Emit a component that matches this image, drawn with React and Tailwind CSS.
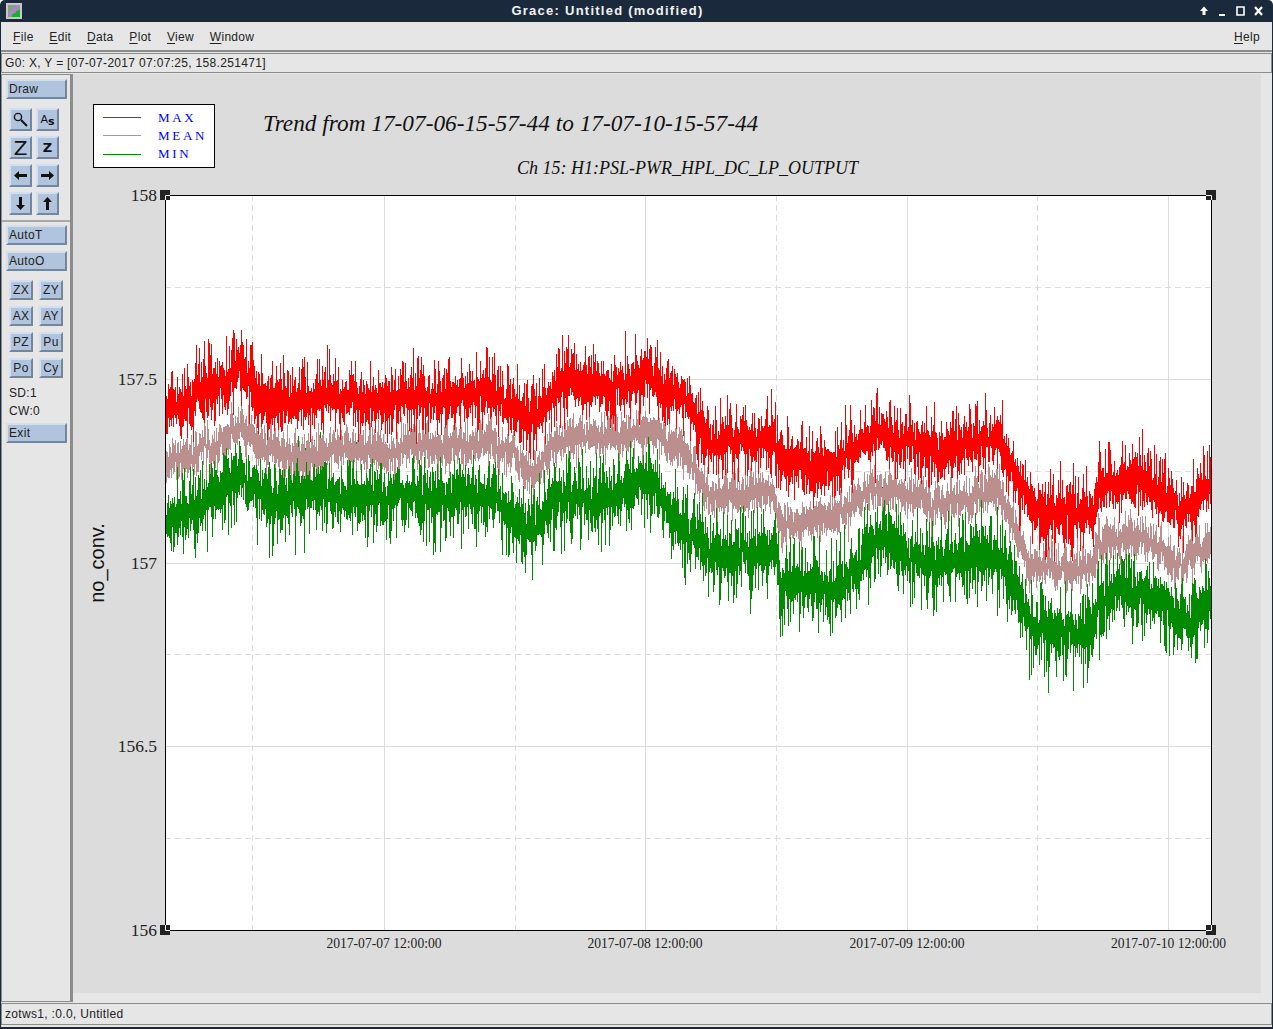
const SANS = "font-['Liberation_Sans',Arial,sans-serif]";

// pixel position of the trace centre along x, read off the plot
const maxCurve = [
	[165, 412], [190, 402], [212, 384], [240, 372], [260, 396], [300, 404], [350, 396], [400, 402],
	[450, 394], [490, 392], [530, 418], [560, 388], [600, 386], [650, 380], [690, 408], [712, 446],
	[772, 436], [780, 466], [830, 466], [870, 432], [930, 450], [1000, 444], [1030, 506], [1060, 518],
	[1093, 512], [1098, 484], [1140, 480], [1175, 506], [1211, 484],
];
const meanCurve = [
	[165, 470], [190, 458], [212, 442], [240, 428], [260, 446], [300, 452], [350, 446], [400, 452],
	[450, 446], [490, 444], [530, 470], [560, 440], [600, 438], [650, 432], [690, 462], [712, 496],
	[772, 490], [780, 522], [830, 524], [870, 484], [930, 502], [1000, 498], [1030, 562], [1060, 576],
	[1093, 570], [1098, 540], [1140, 538], [1175, 566], [1211, 544],
];
const minCurve = [
	[165, 524], [190, 510], [212, 490], [240, 476], [260, 496], [300, 498], [350, 494], [400, 500],
	[450, 492], [490, 496], [525, 532], [560, 500], [600, 498], [650, 488], [690, 530], [712, 558],
	[774, 548], [780, 585], [830, 594], [880, 540], [930, 562], [1000, 556], [1030, 626], [1060, 636],
	[1093, 630], [1098, 596], [1160, 596], [1190, 628], [1211, 600],
];

const makeRandom = (seed) => () => {
	seed = (seed * 1664525 + 1013904223) % 4294967296;
	return seed / 4294967296;
};

const curveAt = (curve, x) => {
	for (let i = 1; i < curve.length; i++) {
		if (x <= curve[i][0]) {
			const [x0, y0] = curve[i - 1];
			const [x1, y1] = curve[i];
			return y0 + ((y1 - y0) * (x - x0)) / (x1 - x0);
		}
	}
	return curve[curve.length - 1][1];
};

// one noisy vertical stroke per sample, so the band looks like a dense trace
const makeTrace = (curve, seed, spread, spike, jitter) => {
	const random = makeRandom(seed);
	let path = "";
	let drift = 0;
	for (let x = 166; x < 1211; x += 1) {
		drift = drift * 0.9 + (random() - 0.5) * 4;
		const wobble = Math.sin(x / 13 + seed) * 3 + drift;
		const centre = curveAt(curve, x) + wobble + (random() - 0.5) * jitter;
		const up = random() ** 3 * spike + spread * (0.4 + random() * 0.7);
		const down = random() ** 3 * spike + spread * (0.4 + random() * 0.7);
		path += `M${x + 0.5} ${(centre - up).toFixed(0)}V${(centre + down).toFixed(0)}`;
	}
	return path;
};

const maxTrace = makeTrace(maxCurve, 11, 17, 32, 12);
const meanTrace = makeTrace(meanCurve, 23, 14, 14, 12);
const minTrace = makeTrace(minCurve, 37, 18, 40, 14);

const BEVEL =
	"border-2 border-t-[#d3dfee] border-l-[#d3dfee] border-b-[#76869a] border-r-[#76869a] bg-[#b0c4de]";

function TextButton({ label, className }) {
	return (
		<div className={`flex h-5 w-[61px] items-center pl-px text-[12px] text-[#222] ${BEVEL} ${className}`}>
			{label}
		</div>
	);
}

function SmallButton({ label }) {
	return (
		<div className={`flex h-5 w-6 items-center justify-center text-[12px] text-[#222] ${BEVEL}`}>{label}</div>
	);
}

function IconButton({ children }) {
	return <div className={`flex h-[23px] w-[23px] items-center justify-center ${BEVEL}`}>{children}</div>;
}

function ArrowIcon({ rotate }) {
	return (
		<svg width="15" height="15" viewBox="0 0 15 15" style={{ transform: `rotate(${rotate}deg)` }}>
			<path d="M1 7.5 6 3v3h8v3H6v3z" fill="#111" />
		</svg>
	);
}

function Menu({ first, rest }) {
	return (
		<span>
			<u className="underline-offset-2">{first}</u>
			{rest}
		</span>
	);
}

function Handle({ x, y, dx, dy }) {
	return (
		<g>
			<rect x={x - 5} y={y - 5} width="10" height="10" fill="#222" />
			<path d={`M${x + dx * 5} ${y + 0.5}H${x + 0.5}V${y + dy * 5}`} stroke="#fff" strokeWidth="1" fill="none" />
		</g>
	);
}

function Plot() {
	const solidX = [384, 645, 907, 1168];
	const dashedX = [252, 515, 776, 1037];
	const solidY = [379, 563, 746];
	const dashedY = [287, 471, 654, 838];
	const yLabels = [
		["158", 201],
		["157.5", 385],
		["157", 569],
		["156.5", 752],
		["156", 936],
	];
	return (
		<svg width="1188" height="919" viewBox="73 74 1188 919" className="block tracking-normal">
			<rect x="93.5" y="104.5" width="121" height="63" fill="#fff" stroke="#000" />
			<path d="M103 117.5H141" stroke="#f00" />
			<path d="M103 135.5H141" stroke="#bc8f8f" />
			<path d="M103 154.5H141" stroke="#008b00" />
			<g fontFamily="'Liberation Serif',serif" fontSize="13" fill="#0000ff" letterSpacing="2.7">
				<text x="158" y="122">MAX</text>
				<text x="158" y="140">MEAN</text>
				<text x="158" y="158">MIN</text>
			</g>
			<g fontFamily="'Liberation Serif',serif" fontStyle="italic" fill="#111">
				<text x="263" y="131" fontSize="23.3">Trend from 17-07-06-15-57-44 to 17-07-10-15-57-44</text>
				<text x="517" y="174" fontSize="18">Ch 15: H1:PSL-PWR_HPL_DC_LP_OUTPUT</text>
			</g>
			<rect x="165.5" y="195.5" width="1046" height="735" fill="#fff" />
			<g stroke="#dcdcdc" shapeRendering="crispEdges">
				{solidX.map((x) => <path key={x} d={`M${x + 0.5} 195V930`} />)}
				{solidY.map((y) => <path key={y} d={`M165 ${y + 0.5}H1211`} />)}
				<g strokeDasharray="6 4">
					{dashedX.map((x) => <path key={x} d={`M${x + 0.5} 195V930`} />)}
					{dashedY.map((y) => <path key={y} d={`M165 ${y + 0.5}H1211`} />)}
				</g>
			</g>
			<path d={maxTrace} stroke="#f00" fill="none" shapeRendering="crispEdges" />
			<path d={minTrace} stroke="#008b00" fill="none" shapeRendering="crispEdges" />
			<path d={meanTrace} stroke="#bc8f8f" fill="none" shapeRendering="crispEdges" />
			<rect x="165.5" y="195.5" width="1046" height="735" fill="none" stroke="#000" />
			<Handle x={165} y={195} dx={1} dy={1} />
			<Handle x={1211} y={195} dx={-1} dy={1} />
			<Handle x={165} y={930} dx={1} dy={-1} />
			<Handle x={1211} y={930} dx={-1} dy={-1} />
			<g fontFamily="'Liberation Serif',serif" fontSize="17.5" fill="#222" textAnchor="end">
				{yLabels.map(([label, y]) => <text key={label} x="157" y={y}>{label}</text>)}
			</g>
			<g fontFamily="'Liberation Serif',serif" fontSize="13.6" fill="#222" textAnchor="middle">
				<text x="384" y="948">2017-07-07 12:00:00</text>
				<text x="645" y="948">2017-07-08 12:00:00</text>
				<text x="907" y="948">2017-07-09 12:00:00</text>
				<text x="1168.5" y="948">2017-07-10 12:00:00</text>
			</g>
			<text
				transform="translate(104 563) rotate(-90)"
				fontFamily="'Liberation Sans',sans-serif"
				fontSize="20"
				fill="#111"
				textAnchor="middle"
			>
				no_conv.
			</text>
		</svg>
	);
}

export default function App() {
	return (
		<div className={`flex h-[1029px] w-[1273px] flex-col overflow-hidden rounded-t-[5px] bg-[#1a2a3c] ${SANS}`}>
			<div className="flex h-[22px] shrink-0 items-center justify-between pl-[6px] pr-[7px]">
				<svg width="16" height="16" viewBox="0 0 16 16">
					<rect width="16" height="16" fill="#c8c8c8" />
					<rect x="2" y="2" width="12" height="12" fill="#8f9a8f" />
					<path d="M3 12 12 3" stroke="#b080e8" strokeWidth="2" />
					<path d="M7 14v-3M9 14v-4M11 14V8M13 14V7" stroke="#1faa3a" strokeWidth="2" />
				</svg>
				<span className="-ml-[7px] text-[13px] font-bold tracking-[1.25px] text-[#f2f2f2]">
					Grace: Untitled (modified)
				</span>
				<svg width="66" height="12" viewBox="0 0 66 12">
					<path d="M0 6 4 1.5 8 6H5.5v4h-3V6z" fill="#fff" />
					<path d="M19 9h6v2h-6z" fill="#fff" />
					<path d="M37 2h7v8h-7z" fill="none" stroke="#fff" strokeWidth="1.6" />
					<path d="m55 2 7 8M62 2l-7 8" stroke="#fff" strokeWidth="2.2" />
				</svg>
			</div>
			<div className="mx-px mb-[2px] flex min-h-0 flex-1 flex-col bg-[#e6e6e6] text-[12px] tracking-[0.32px] text-[#222]">
				<div className="flex h-[30px] shrink-0 items-center justify-between border-b-2 border-[#8c8c8c] pl-3 pr-[12px] pt-[2px]">
					<div className="flex gap-[15.7px]">
						<Menu first="F" rest="ile" />
						<Menu first="E" rest="dit" />
						<Menu first="D" rest="ata" />
						<Menu first="P" rest="lot" />
						<Menu first="V" rest="iew" />
						<Menu first="W" rest="indow" />
					</div>
					<Menu first="H" rest="elp" />
				</div>
				<div className="mt-px flex h-[20px] shrink-0 items-center border border-[#8c8c8c] pl-[3px]">
					G0: X, Y = [07-07-2017 07:07:25, 158.251471]
				</div>
				<div className="mt-px flex min-h-0 flex-1">
					<div className="flex w-[70px] shrink-0 flex-col border border-[#8c8c8c] pl-[4px] pt-[4px]">
						<TextButton label="Draw" />
						<div className="mt-[9px] grid w-[52px] grid-cols-2 gap-[5px] pl-[3px]">
							<IconButton>
								<svg width="17" height="17" viewBox="0 0 17 17">
									<circle cx="6" cy="6" r="3.6" fill="none" stroke="#111" strokeWidth="1.4" />
									<path d="m9 9 6 6" stroke="#111" strokeWidth="2" />
								</svg>
							</IconButton>
							<IconButton>
								<span className="font-['DejaVu_Sans',sans-serif] text-[11px] leading-none tracking-normal text-[#111]">
									A<span className="relative top-[2px] font-bold">s</span>
								</span>
							</IconButton>
							<IconButton>
								<span className="font-['DejaVu_Sans',sans-serif] text-[20px] leading-none tracking-normal text-[#111]">Z</span>
							</IconButton>
							<IconButton>
								<span className="font-['DejaVu_Sans',sans-serif] text-[13px] font-bold leading-none tracking-normal text-[#111]">Z</span>
							</IconButton>
							<IconButton><ArrowIcon rotate={0} /></IconButton>
							<IconButton><ArrowIcon rotate={180} /></IconButton>
							<IconButton><ArrowIcon rotate={270} /></IconButton>
							<IconButton><ArrowIcon rotate={90} /></IconButton>
						</div>
						<div className="-ml-[4px] mt-[5px] h-[2px] w-[68px] shrink-0 bg-[#a8a8a8]" />
						<TextButton label="AutoT" className="mt-[3px]" />
						<TextButton label="AutoO" className="mt-[6px]" />
						<div className="mt-[9px] grid w-[57px] grid-cols-2 gap-x-[6px] gap-y-[6px] pl-[3px]">
							{["ZX", "ZY", "AX", "AY", "PZ", "Pu", "Po", "Cy"].map((label) => (
								<SmallButton key={label} label={label} />
							))}
						</div>
						<div className="mt-[6px] pl-[3px] leading-[18px]">SD:1</div>
						<div className="pl-[3px] leading-[18px]">CW:0</div>
						<TextButton label="Exit" className="mt-[3px]" />
					</div>
					<div className="w-[2px] shrink-0 bg-[#8c8c8c]" />
					<div className="min-w-0 flex-1 pb-[8px] pr-[10px]">
						<div className="h-[919px] w-[1188px] bg-[#dcdcdc]">
							<Plot />
						</div>
					</div>
				</div>
				<div className="mt-px flex h-[22px] shrink-0 items-center border border-[#8c8c8c] pl-[3px]">
					zotws1, :0.0, Untitled
				</div>
				<div className="h-[2px] shrink-0" />
			</div>
		</div>
	);
}
